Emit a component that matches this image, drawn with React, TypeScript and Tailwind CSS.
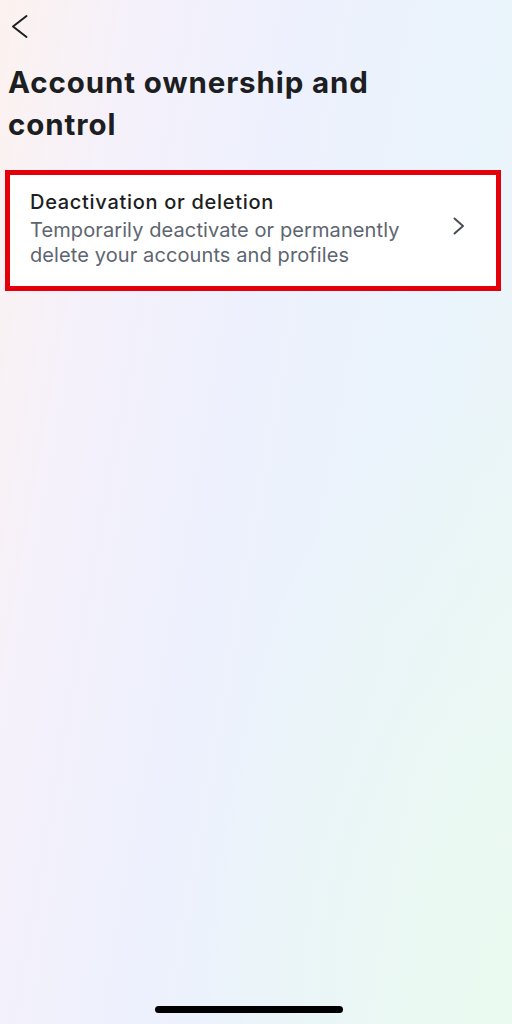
import React from 'react';

const ChevronLeft = () => (
  <svg width="18" height="25" viewBox="0 0 18 25" fill="none">
    <path d="M15.5 2 L2 12.5 L15.5 23" stroke="#1c1e21" strokeWidth="2" strokeLinecap="round" strokeLinejoin="round" />
  </svg>
);

const ChevronRight = () => (
  <svg width="14" height="18" viewBox="0 0 14 18" fill="none">
    <path d="M2.5 1.5 L11 9 L2.5 16.5" stroke="#4a4e55" strokeWidth="2" strokeLinecap="round" strokeLinejoin="round" />
  </svg>
);

export default function App() {
  return (
    <div
      className="relative w-[512px] h-[1024px] overflow-hidden bg-[linear-gradient(100deg,#fcf2ef_0%,#f5f1fb_20%,#edf1fd_45%,#eaf4fb_75%,#ecf7f5_100%)]"
      style={{ fontFamily: 'Inter, "Noto Sans", sans-serif' }}
    >
      <div className="absolute inset-0 bg-[radial-gradient(ellipse_at_100%_100%,#eafaf0_0%,rgba(234,250,240,0)_45%)]" />
      <div className="relative flex flex-col">
        {/* Header */}
        <div className="pl-[11px] pt-[14px] h-[61px]">
          <ChevronLeft />
        </div>
        <h1 className="px-[8px] text-[29.5px] leading-[42px] font-bold text-[#1c1e21] tracking-[0.9px]">
          Account ownership and
          <br />
          control
        </h1>

        {/* Card */}
        <div className="mt-[25px] ml-[5px] w-[496px] border-[5px] border-[#e3000b]">
          <div className="bg-white flex items-center pl-[20px] pr-[30px] pt-[12px] pb-[18px]">
            <div className="flex-1">
              <div className="text-[20px] leading-[30px] font-medium text-[#1c1e21] tracking-[0.7px]">
                Deactivation or deletion
              </div>
              <div className="mt-[1px] text-[20px] leading-[25px] text-[#5d6570] tracking-[0.1px]">
                Temporarily deactivate or permanently
                <br />
                delete your accounts and profiles
              </div>
            </div>
            <div className="mb-[3px]">
              <ChevronRight />
            </div>
          </div>
        </div>
      </div>

      {/* Home indicator */}
      <div className="absolute left-[155px] top-[1006px] w-[188px] h-[7px] rounded-full bg-black" />
    </div>
  );
}
